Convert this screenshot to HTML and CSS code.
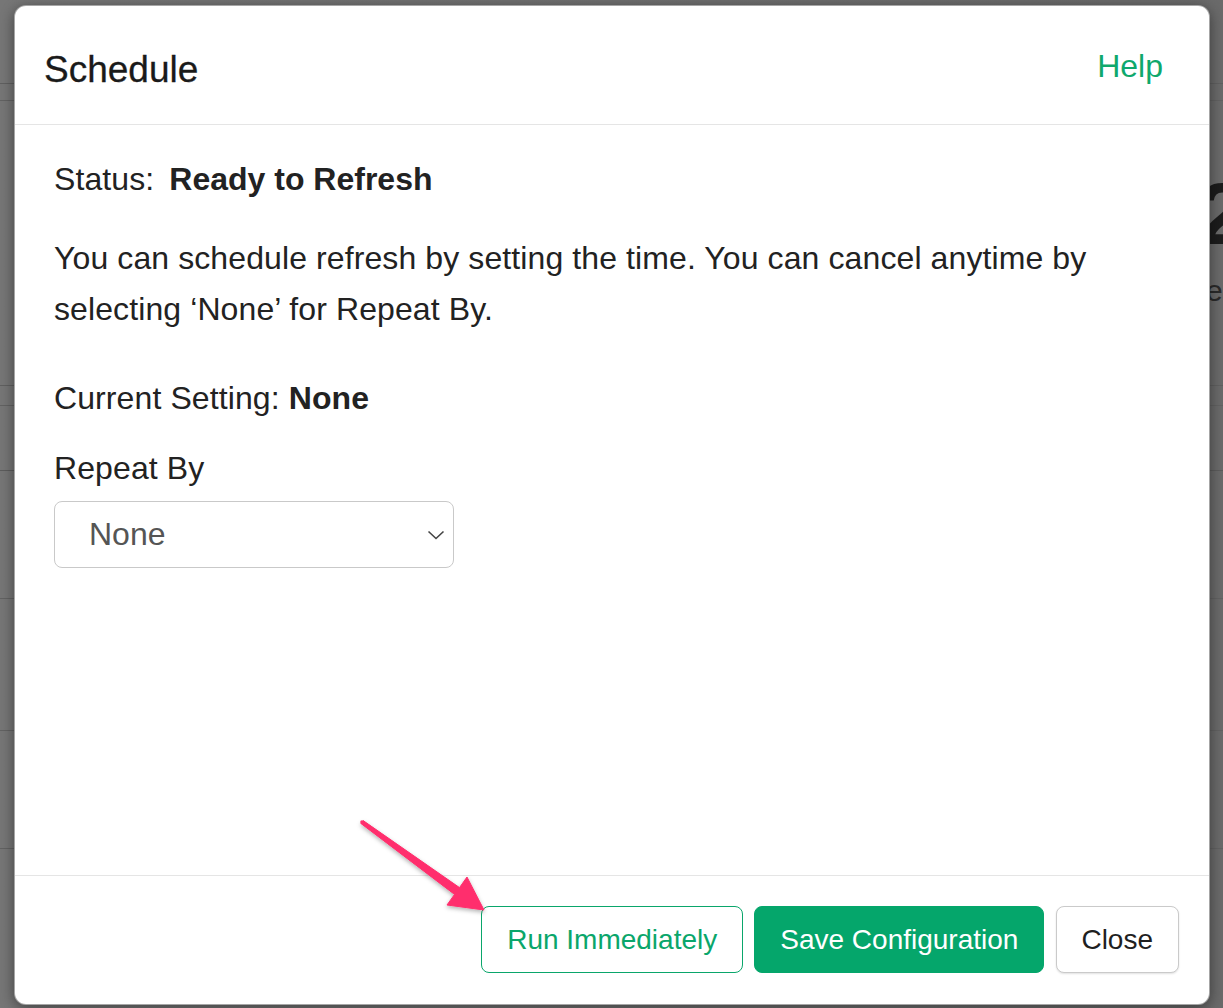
FILE: index.html
```html
<!DOCTYPE html>
<html lang="en">
<head>
<meta charset="utf-8">
<title>Schedule</title>
<link rel="stylesheet" href="styles.css">
</head>
<body>
<div class="backdrop-text">2</div>
<div class="backdrop-small">e</div>
<div class="modal">
  <div class="modal-header">
    <h4 class="modal-title">Schedule</h4>
    <a class="help-link">Help</a>
  </div>
  <div class="modal-body">
    <div class="status">Status:<b class="status-value">Ready to Refresh</b></div>
    <p class="desc">You can schedule refresh by setting the time. You can cancel anytime by selecting ‘None’ for Repeat By.</p>
    <div class="current">Current Setting: <b>None</b></div>
    <div class="label">Repeat By</div>
    <div class="select">
      <span>None</span>
      <svg class="chev" width="18" height="10" viewBox="0 0 18 10"><path d="M1.5 1.5 L9 8.5 L16.5 1.5" fill="none" stroke="#444" stroke-width="1.6"/></svg>
    </div>
  </div>
  <div class="modal-footer">
    <button class="btn btn-outline">Run Immediately</button>
    <button class="btn btn-primary">Save Configuration</button>
    <button class="btn btn-default">Close</button>
  </div>
</div>
<svg class="arrow" width="1223" height="1008" viewBox="0 0 1223 1008">
  <defs>
    <filter id="sh" x="-20%" y="-20%" width="140%" height="140%">
      <feDropShadow dx="0" dy="2" stdDeviation="2" flood-color="#000" flood-opacity="0.3"/>
    </filter>
  </defs>
  <polygon filter="url(#sh)" fill="#ff2f6d" stroke="#ff2f6d" stroke-width="1" stroke-linejoin="round"
    points="363.2,820.6 459.5,887.6 467,877 484,910 447,905 454.5,894.4 360.8,823.4"/>
  <circle cx="362" cy="822" r="1.8" fill="#ff2f6d"/>
</svg>
</body>
</html>
```

FILE: styles.css
```css
html, body {
  margin: 0;
  padding: 0;
}
body {
  width: 1223px;
  height: 1008px;
  overflow: hidden;
  position: relative;
  font-family: "Liberation Sans", Arial, Helvetica, sans-serif;
  color: #222;
  background-color: #6c6c6c;
  background-image:
    linear-gradient(#606060, #606060),
    linear-gradient(#626262, #626262),
    linear-gradient(#606060, #606060),
    linear-gradient(#626262, #626262),
    linear-gradient(#5c5c5c, #5c5c5c),
    linear-gradient(#626262, #626262),
    linear-gradient(#626262, #626262),
    linear-gradient(#626262, #626262),
    linear-gradient(90deg, #767676 0%, #6a6a6a 100%);
  background-size:
    100% 1px, 100% 1px, 100% 1px, 100% 1px, 100% 1px, 100% 1px, 100% 1px, 100% 1px, 100% 100%;
  background-position:
    0 83px, 0 100px, 0 385px, 0 405px, 0 470px, 0 598px, 0 730px, 0 848px, 0 0;
  background-repeat: no-repeat;
}
.backdrop-text {
  position: absolute;
  left: 1198px;
  top: 170px;
  font-size: 88px;
  font-weight: bold;
  color: #1c1c1c;
  line-height: 1;
}
.backdrop-small {
  position: absolute;
  left: 1206px;
  top: 276px;
  font-size: 30px;
  color: #2a2a2a;
  line-height: 1;
}
.modal {
  position: relative;
  z-index: 1;
  margin: 5px 0 0 14px;
  width: 1196px;
  height: 1000px;
  box-sizing: border-box;
  background: #fff;
  border: 1px solid rgba(0, 0, 0, 0.35);
  border-radius: 12px;
  box-shadow: 0 3px 14px rgba(0, 0, 0, 0.45);
  display: flex;
  flex-direction: column;
}
.modal-header {
  height: 119px;
  box-sizing: border-box;
  border-bottom: 1px solid #e5e5e5;
  padding: 44px 46px 0 29px;
  display: flex;
  justify-content: space-between;
  align-items: flex-start;
}
.modal-title {
  margin: 2px 0 0;
  font-size: 37px;
  line-height: 36px;
  font-weight: normal;
  color: #1a1a1a;
  -webkit-text-stroke: 0.3px #1a1a1a;
}
.help-link {
  font-size: 32px;
  line-height: 32px;
  color: #0fa86c;
  text-decoration: none;
}
.modal-body {
  flex: 1;
  padding: 29px 39px 0;
  font-size: 32px;
  line-height: 51px;
  letter-spacing: 0.1px;
}
.status-value {
  margin-left: 15px;
  letter-spacing: 0;
}
.status b, .current b {
  font-weight: bold;
}
.desc {
  margin: 28px 0 0;
}
.current {
  margin-top: 38px;
}
.label {
  margin-top: 19px;
}
.select {
  margin-top: 7px;
  width: 400px;
  height: 67px;
  box-sizing: border-box;
  border: 1px solid #c9c9c9;
  border-radius: 8px;
  padding: 0 8px 0 34px;
  display: flex;
  align-items: center;
  justify-content: space-between;
  color: #555;
  font-size: 32px;
  letter-spacing: 0;
}
.modal-footer {
  border-top: 1px solid #e5e5e5;
  padding: 30px 30px 31px;
  display: flex;
  justify-content: flex-end;
  gap: 11px;
}
.btn {
  height: 67px;
  box-sizing: border-box;
  padding: 0 25px;
  font-family: "Liberation Sans", Arial, Helvetica, sans-serif;
  font-size: 28px;
  border-radius: 8px;
  border: 1px solid #ccc;
  background: #fff;
  color: #222;
  line-height: 1;
}
.btn-outline {
  border-color: #0aa66b;
  color: #0aa66b;
}
.btn-primary {
  background: #05a66b;
  border-color: #05a66b;
  color: #fff;
}
.btn-default {
  margin-left: 1px;
  padding: 0 25px 0 24px;
  border-color: #cacaca;
  color: #1f1f1f;
  box-shadow: 0 1px 2px rgba(0, 0, 0, 0.12);
}
.arrow {
  position: absolute;
  left: 0;
  top: 0;
  z-index: 2;
  pointer-events: none;
}
```
